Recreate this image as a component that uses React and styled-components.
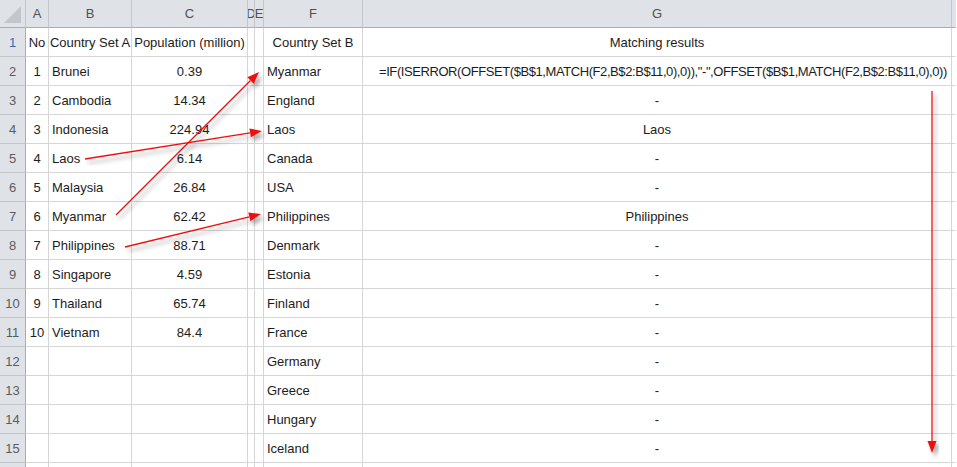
import React from "react";
import styled, { createGlobalStyle } from "styled-components";

const GlobalStyle = createGlobalStyle`
  html, body {
    margin: 0;
    padding: 0;
    background: #ffffff;
  }
  body {
    font-family: "Liberation Sans", Arial, sans-serif;
    overflow: hidden;
  }
`;

const COLS = [26, 23, 83, 116, 7, 9, 99, 589, 4];
const LETTERS = ["", "A", "B", "C", "D", "E", "F", "G", ""];

const countriesA = [
  ["Brunei", "0.39"],
  ["Cambodia", "14.34"],
  ["Indonesia", "224.94"],
  ["Laos", "6.14"],
  ["Malaysia", "26.84"],
  ["Myanmar", "62.42"],
  ["Philippines", "88.71"],
  ["Singapore", "4.59"],
  ["Thailand", "65.74"],
  ["Vietnam", "84.4"],
];

const countriesB = [
  "Myanmar", "England", "Laos", "Canada", "USA", "Philippines", "Denmark",
  "Estonia", "Finland", "France", "Germany", "Greece", "Hungary", "Iceland",
];

// index into countriesB -> match found in set A
const results = {
  2: "Laos",
  5: "Philippines",
};

const FORMULA =
  '=IF(ISERROR(OFFSET($B$1,MATCH(F2,B$2:B$11,0),0)),"-",OFFSET($B$1,MATCH(F2,B$2:B$11,0),0))';

const Sheet = styled.div`
  position: relative;
  width: 957px;
  height: 467px;
  overflow: hidden;
`;

const Grid = styled.div`
  display: grid;
  grid-template-columns: ${COLS.map((w) => `${w}px`).join(" ")};
  grid-template-rows: 28px repeat(16, 29px);
`;

const ColHead = styled.div`
  box-sizing: border-box;
  background: #dfe3e8;
  border-right: 1px solid ${(p) => (p.$last ? "transparent" : "#c3c7cc")};
  border-bottom: 1px solid #a9adb3;
  color: #505050;
  font-size: 13px;
  display: flex;
  align-items: center;
  justify-content: center;
  overflow: hidden;
  white-space: nowrap;
  position: relative;
`;

const CornerMark = styled.span`
  position: absolute;
  right: 4px;
  bottom: 4px;
  width: 0;
  height: 0;
  border-left: 17px solid transparent;
  border-bottom: 17px solid #c3c7cc;
`;

const RowHead = styled.div`
  box-sizing: border-box;
  background: #dfe3e8;
  border-right: 1px solid #a9adb3;
  border-bottom: 1px solid #c3c7cc;
  color: ${(p) => (p.$active ? "#2f6db5" : "#5c5c5c")};
  font-size: 13px;
  display: flex;
  align-items: center;
  justify-content: center;
`;

const Cell = styled.div`
  box-sizing: border-box;
  border-right: 1px solid ${(p) => (p.$none ? "transparent" : "#d6d6d6")};
  border-bottom: 1px solid #d6d6d6;
  background: #ffffff;
  color: #1c1c1c;
  font-size: 13px;
  display: flex;
  align-items: center;
  justify-content: ${(p) => (p.$align === "left" ? "flex-start" : "center")};
  padding: 0 ${(p) => (p.$align === "left" ? "3px" : "0")};
  white-space: nowrap;
  overflow: hidden;
  position: relative;
`;

const Formula = styled.span`
  position: absolute;
  left: 16px;
  white-space: nowrap;
  letter-spacing: -0.42px;
`;

const Overlay = styled.svg`
  position: absolute;
  left: 0;
  top: 0;
  pointer-events: none;
`;

function rowCells(r) {
  // r is the 1-based sheet row number
  const a = countriesA[r - 2];
  const b = countriesB[r - 2];
  let no = "";
  let name = "";
  let pop = "";
  let f = "";
  let g = "";
  if (r === 1) {
    no = "No";
    name = "Country Set A";
    pop = "Population (million)";
    f = "Country Set B";
    g = "Matching results";
  } else {
    if (a) {
      no = String(r - 1);
      name = a[0];
      pop = a[1];
    }
    if (b) {
      f = b;
      g = r === 2 ? "" : results[r - 2] || "-";
    }
  }
  return (
    <React.Fragment key={r}>
      <RowHead $active={r === 1}>{r <= 15 ? r : ""}</RowHead>
      <Cell>{no}</Cell>
      <Cell $align={r === 1 ? "center" : "left"}>{name}</Cell>
      <Cell>{pop}</Cell>
      <Cell />
      <Cell />
      <Cell $align={r === 1 ? "center" : "left"}>{f}</Cell>
      <Cell>{r === 2 ? <Formula>{FORMULA}</Formula> : g}</Cell>
      <Cell $none />
    </React.Fragment>
  );
}

const Arrow = ({ x1, y1, x2, y2 }) => {
  const ang = Math.atan2(y2 - y1, x2 - x1);
  const len = 12;
  const half = 4.5;
  const bx = x2 - len * Math.cos(ang);
  const by = y2 - len * Math.sin(ang);
  const px = -Math.sin(ang) * half;
  const py = Math.cos(ang) * half;
  return (
    <g filter="url(#shadow)">
      <line x1={x1} y1={y1} x2={bx} y2={by} stroke="#f01010" strokeWidth="1.3" />
      <polygon
        points={`${x2},${y2} ${bx + px},${by + py} ${bx - px},${by - py}`}
        fill="#f01010"
      />
    </g>
  );
};

export default function App() {
  const rows = [];
  for (let r = 1; r <= 16; r++) rows.push(rowCells(r));
  return (
    <Sheet>
      <GlobalStyle />
      <Grid>
        {LETTERS.map((l, i) => (
          <ColHead key={i} $last={i === LETTERS.length - 1}>
            {i === 0 && <CornerMark />}
            {l}
          </ColHead>
        ))}
        {rows}
      </Grid>
      <Overlay width="957" height="467" viewBox="0 0 957 467">
        <defs>
          <filter id="shadow" x="-20%" y="-20%" width="140%" height="140%">
            <feDropShadow dx="3" dy="4" stdDeviation="2" floodColor="#000" floodOpacity="0.35" />
          </filter>
        </defs>
        <Arrow x1={116} y1={215} x2={259} y2={72} />
        <Arrow x1={85} y1={159} x2={262} y2={131} />
        <Arrow x1={125} y1={247} x2={261} y2={214} />
        <Arrow x1={932} y1={91} x2={932} y2={453} />
      </Overlay>
    </Sheet>
  );
}
